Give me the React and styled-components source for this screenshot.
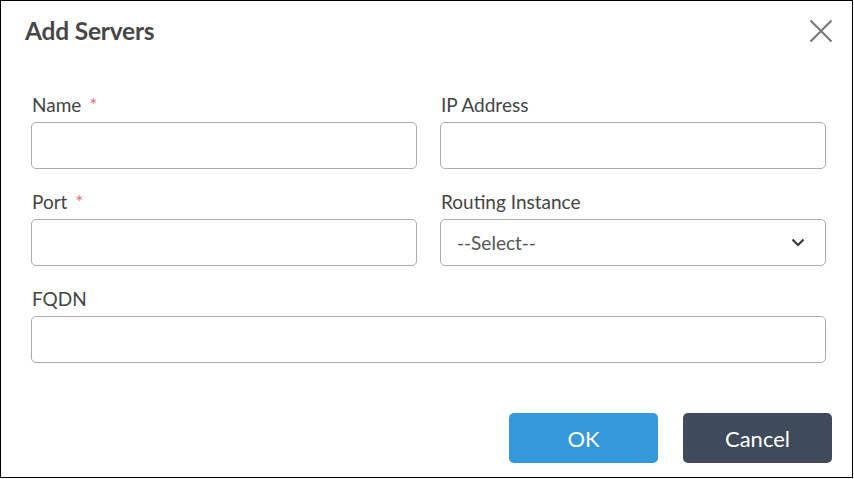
import React from 'react';
import styled, { createGlobalStyle } from 'styled-components';

const GlobalStyle = createGlobalStyle`
  html, body {
    margin: 0;
    padding: 0;
    background: #fff;
    font-family: Lato, "Open Sans", Arial, sans-serif;
  }
  * { box-sizing: border-box; }
`;

const App = () => {
  return (
    <>
      <GlobalStyle />
      <Dialog>
        <Header>
          <Title>Add Servers</Title>
          <CloseButton aria-label="close">
            <svg width="24" height="24" viewBox="0 0 24 24">
              <path d="M1.5 1.5 L22.5 22.5 M22.5 1.5 L1.5 22.5" stroke="#777" strokeWidth="2" fill="none" />
            </svg>
          </CloseButton>
        </Header>
        <Form>
          <Field>
            <Label>
              Name <Required>*</Required>
            </Label>
            <Input />
          </Field>
          <Field>
            <Label>IP Address</Label>
            <Input />
          </Field>
          <Field>
            <Label>
              Port <Required>*</Required>
            </Label>
            <Input />
          </Field>
          <Field>
            <Label>Routing Instance</Label>
            <Select>
              <span>--Select--</span>
              <svg width="14" height="9" viewBox="0 0 14 9">
                <path d="M1.5 1.5 L7 7 L12.5 1.5" stroke="#333" strokeWidth="2" fill="none" />
              </svg>
            </Select>
          </Field>
          <Field wide>
            <Label>FQDN</Label>
            <Input />
          </Field>
        </Form>
        <Footer>
          <Button variant="primary">OK</Button>
          <Button>Cancel</Button>
        </Footer>
      </Dialog>
    </>
  );
};

export default App;

const Dialog = styled.div`
  width: 853px;
  height: 478px;
  border: 1px solid #000;
  background: #fff;
  display: flex;
  flex-direction: column;
`;

const Header = styled.div`
  display: flex;
  justify-content: space-between;
  align-items: center;
  padding: 15px 19px 0 24px;
  height: 44px;
`;

const Title = styled.h2`
  margin: 0;
  font-size: 24.5px;
  font-weight: 700;
  color: #474747;
  line-height: 28px;
  letter-spacing: -0.2px;
`;

const CloseButton = styled.div`
  width: 24px;
  height: 24px;
  display: flex;
  align-items: center;
  justify-content: center;
  cursor: pointer;
`;

const Form = styled.div`
  display: grid;
  grid-template-columns: 1fr 1fr;
  column-gap: 23px;
  row-gap: 22px;
  padding: 49px 26px 0 30px;
`;

const Field = styled.div`
  display: flex;
  flex-direction: column;
  gap: 6px;
  grid-column: ${({ wide }) => (wide ? '1 / span 2' : 'auto')};
`;

const Label = styled.label`
  font-size: 19px;
  line-height: 22px;
  font-weight: 400;
  color: #444;
  padding-left: 1px;
`;

const Required = styled.span`
  color: #e8707f;
  margin-left: 3px;
`;

const Input = styled.input`
  height: 47px;
  border: 1px solid #ababab;
  border-radius: 5px;
  padding: 0 14px;
  font-family: inherit;
  font-size: 19px;
  outline: none;
`;

const Select = styled.div`
  height: 47px;
  border: 1px solid #ababab;
  border-radius: 5px;
  padding: 0 20px 0 16px;
  display: flex;
  align-items: center;
  justify-content: space-between;
  font-size: 19px;
  color: #555;
`;

const Footer = styled.div`
  display: flex;
  justify-content: flex-end;
  gap: 25px;
  padding: 50px 20px 0 0;
`;

const Button = styled.button`
  width: 149px;
  height: 50px;
  border: none;
  border-radius: 5px;
  font-family: inherit;
  font-size: 22px;
  color: #fff;
  cursor: pointer;
  background: ${({ variant }) => (variant === 'primary' ? '#3498db' : '#3f4a5a')};
`;
